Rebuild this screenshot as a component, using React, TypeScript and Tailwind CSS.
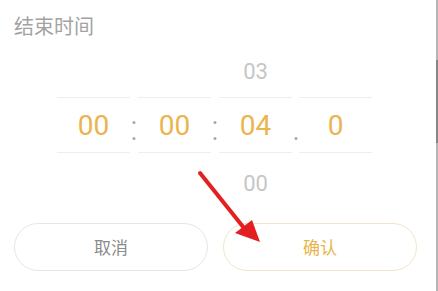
import React from "react";

const cjk = { fontFamily: '"Noto Sans CJK SC", "Noto Sans", sans-serif' };
const num = { fontFamily: 'Roboto, "Noto Sans", sans-serif' };

const columns = [
  { value: "00" },
  { value: "00" },
  { value: "04", above: "03", below: "00" },
  { value: "0" },
];

// separator between picker columns: colon or single dot
const Sep = ({ kind, w }: { kind: "colon" | "dot"; w: string }) => (
  <div className={`${w} flex flex-col items-center`}>
    <div className="h-[56px]" />
    <div className="h-[56px] relative">
      {kind === "colon" && (
        <div className="absolute top-[24px] left-1/2 -translate-x-1/2 w-[3px] h-[3px] rounded-full bg-[#a8a8a8]" />
      )}
      <div className="absolute top-[40px] left-1/2 -translate-x-1/2 w-[3px] h-[3px] rounded-full bg-[#a8a8a8]" />
    </div>
  </div>
);

const Column = ({ value, above, below }: { value: string; above?: string; below?: string }) => (
  <div className="w-[73px] flex flex-col" style={num}>
    <div className="h-[56px] flex items-center justify-center pt-[5px] text-[22px] text-[#c6c6c6]">
      {above}
    </div>
    <div className="h-[56px] flex items-center justify-center pt-[2px] border-y border-[#eeeeee] text-[28px] text-[#ebb44e]">
      {value}
    </div>
    <div className="h-[56px] flex items-center justify-center pt-[4px] text-[22px] text-[#c6c6c6]">
      {below}
    </div>
  </div>
);

export default function App() {
  return (
    <div className="w-[438px] h-[291px] bg-white flex overflow-hidden">
      <div className="w-[436px] h-full relative">
        {/* Title */}
        <div className="pt-[12px] pl-[14px] text-[20px] leading-[28px] text-[#a3a3a3]" style={cjk}>
          结束时间
        </div>

        {/* Picker */}
        <div className="mt-[1px] flex pl-[57px]">
          <Column {...columns[0]} />
          <Sep kind="colon" w="w-[8px]" />
          <Column {...columns[1]} />
          <Sep kind="colon" w="w-[8px]" />
          <Column {...columns[2]} />
          <Sep kind="dot" w="w-[7px]" />
          <Column {...columns[3]} />
        </div>

        {/* Buttons */}
        <div className="mt-[14px] flex gap-[15px] pl-[14px]" style={cjk}>
          <button className="w-[194px] h-[48px] rounded-full border border-[#e6e6e6] text-[17px] text-[#8a8a8a]">
            取消
          </button>
          <button className="w-[194px] h-[48px] rounded-full border border-[#f0e6c6] text-[17px] text-[#e8b54a]">
            确认
          </button>
        </div>

        {/* Red annotation arrow */}
        <svg className="absolute left-0 top-0 pointer-events-none" width="436" height="291">
          <line x1="200" y1="173" x2="244" y2="228" stroke="#e3201f" strokeWidth="4" strokeLinecap="round" />
          <polygon points="235,233 252,220 260,242" fill="#e3201f" />
        </svg>
      </div>

      {/* Right edge scrollbar line */}
      <div className="w-[2px] h-full bg-[#b4b4b4] flex flex-col">
        <div className="h-[60px]" />
        <div className="h-[83px] bg-[#858585]" />
      </div>
    </div>
  );
}
